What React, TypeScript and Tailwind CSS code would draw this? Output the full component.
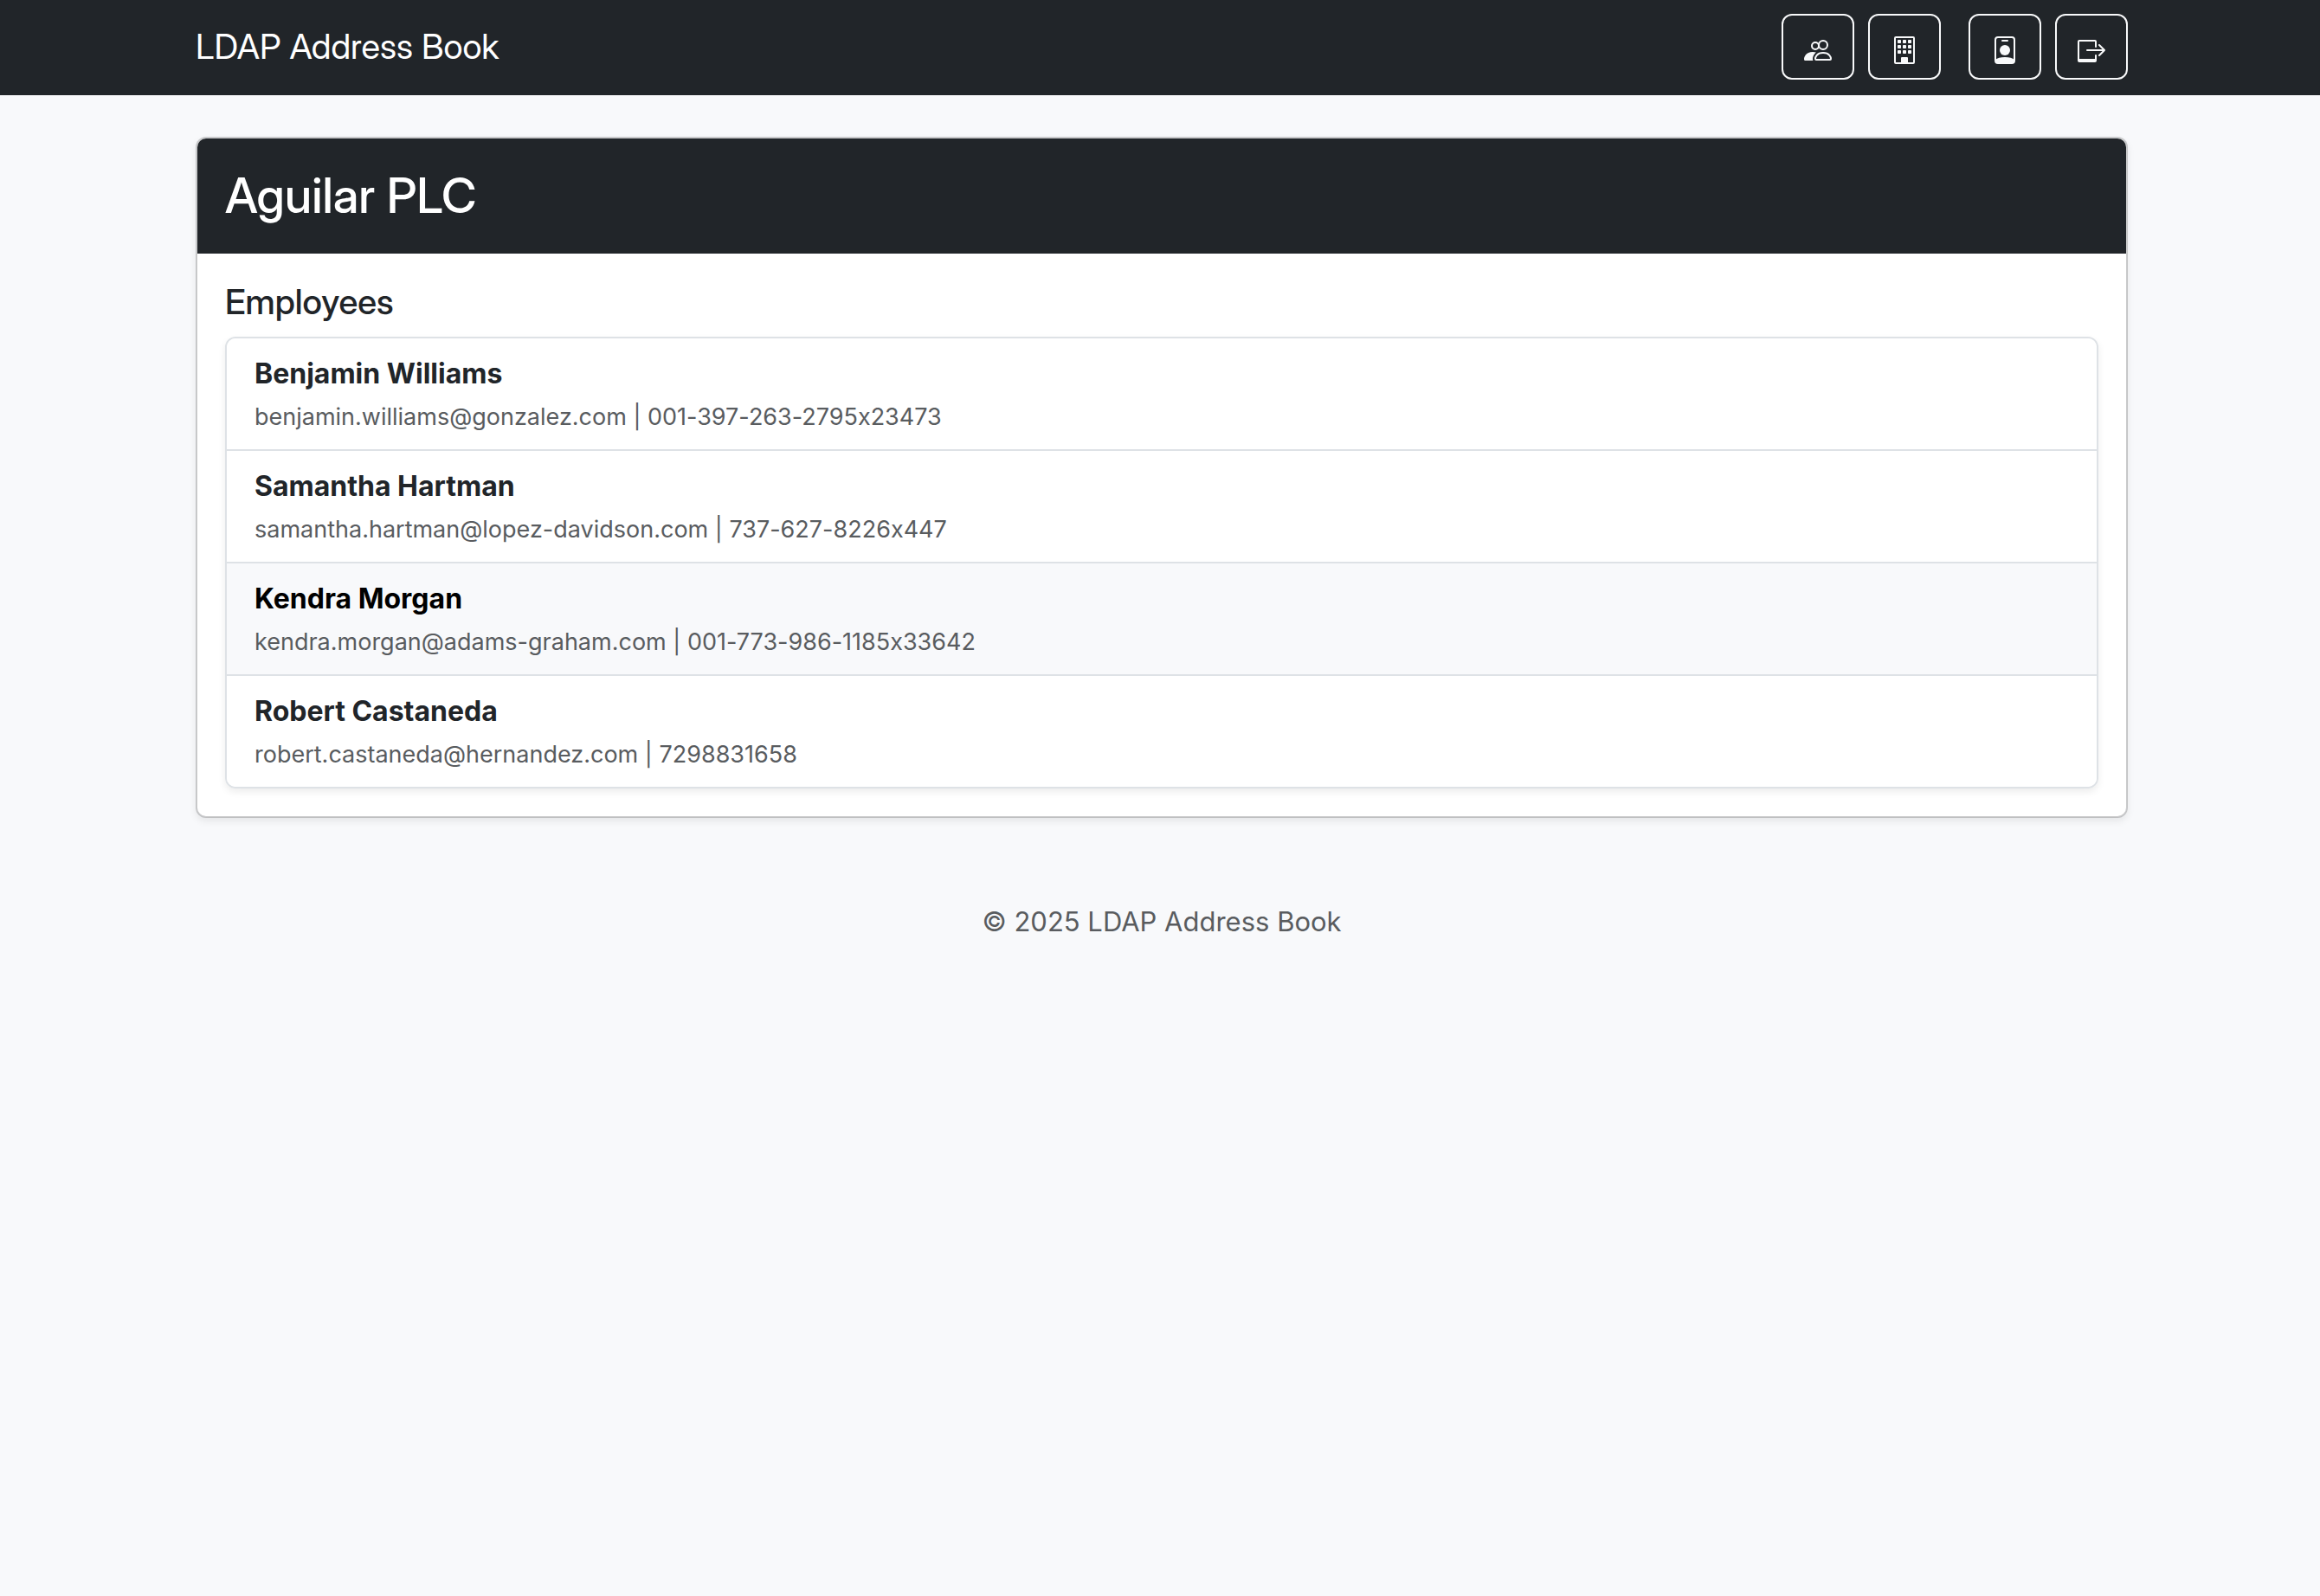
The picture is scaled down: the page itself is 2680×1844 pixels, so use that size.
import type { ReactNode } from "react";

const employees = [
  { name: "Benjamin Williams", email: "benjamin.williams@gonzalez.com", phone: "001-397-263-2795x23473" },
  { name: "Samantha Hartman", email: "samantha.hartman@lopez-davidson.com", phone: "737-627-8226x447" },
  { name: "Kendra Morgan", email: "kendra.morgan@adams-graham.com", phone: "001-773-986-1185x33642", active: true },
  { name: "Robert Castaneda", email: "robert.castaneda@hernandez.com", phone: "7298831658" },
];

function PeopleIcon() {
  return (
    <svg viewBox="0 0 32 32" className="size-8" aria-hidden="true">
      <circle cx="13" cy="11" r="4" fill="none" stroke="currentColor" strokeWidth="2" />
      <circle cx="22" cy="10" r="5" fill="#212529" stroke="currentColor" strokeWidth="2" />
      <path
        fill="currentColor"
        d="M10 18C2 18 0 24 0 26.2c0 1.3.6 1.8 1.8 1.8h8.6a4.5 4.5 0 0 1-.4-2c0-2 .8-4.2 2.2-5.8.5-.6 1.1-1.1 1.7-1.6A12 12 0 0 0 10 18Z"
      />
      <path
        fill="none"
        stroke="currentColor"
        strokeWidth="2"
        d="M22 19c-7.5 0-9 5.200-9 7 0 .8.2 1 1 1h16c.8 0 1-.2 1-1 0-1.800-1.500-7-9-7Z"
      />
    </svg>
  );
}

function BuildingIcon() {
  return (
    <svg viewBox="0 0 32 32" className="size-8" fill="currentColor" aria-hidden="true">
      <rect x="5" y="1" width="22" height="30" rx="1" fill="none" stroke="currentColor" strokeWidth="2" />
      <rect x="12" y="24" width="8" height="8" rx="1" />
      {[4, 10, 16].map((y) =>
        [8, 14, 20].map((x) => <rect key={`${x}-${y}`} x={x} y={y} width="4" height="4" rx="0.8" />),
      )}
    </svg>
  );
}

function BadgeIcon() {
  return (
    <svg viewBox="0 0 32 32" className="size-8" fill="currentColor" aria-hidden="true">
      <rect x="5" y="1" width="22" height="30" rx="3" fill="none" stroke="currentColor" strokeWidth="2" />
      <rect x="12" y="4" width="8" height="2" rx="1" />
      <circle cx="16" cy="16" r="6" />
      <path d="M5 27c2-2 6-3 11-3s9 1 11 3v1a3 3 0 0 1-3 3H8a3 3 0 0 1-3-3Z" />
    </svg>
  );
}

function LogOutIcon() {
  return (
    <svg viewBox="0 0 32 32" className="size-8" fill="none" stroke="currentColor" strokeWidth="2" strokeLinecap="round" strokeLinejoin="round" aria-hidden="true">
      <path d="M21 12V6a1 1 0 0 0-1-1H2a1 1 0 0 0-1 1v22a1 1 0 0 0 1 1h18a1 1 0 0 0 1-1v-6" />
      <path d="M2 27h18" strokeLinecap="butt" />
      <path d="M11 16h20M25 10l6 6-6 6" />
    </svg>
  );
}

function NavButton({ label, children }: { label: string; children: ReactNode }) {
  return (
    <button
      type="button"
      aria-label={label}
      className="flex h-[76px] w-[84px] items-center justify-center rounded-xl border-2 border-[#f8f9fa] pt-2 text-[#f8f9fa]"
    >
      {children}
    </button>
  );
}

export default function App() {
  return (
    <div className="min-h-screen bg-[#f8f9fb] pb-16 font-['Inter',sans-serif] text-[32px] leading-[48px] text-[#212529]">
      <nav className="bg-[#212529] pl-1">
        <div className="mx-auto flex max-w-[2232px] items-center justify-between pt-4 pb-[18px]">
          <a href="#" className="font-['Inter_Display','Inter',sans-serif] text-[40px] leading-[60px] text-white">LDAP Address Book</a>
          <div className="flex gap-8">
            <div className="flex gap-4">
              <NavButton label="People"><PeopleIcon /></NavButton>
              <NavButton label="Companies"><BuildingIcon /></NavButton>
            </div>
            <div className="flex gap-4">
              <NavButton label="Profile"><BadgeIcon /></NavButton>
              <NavButton label="Log out"><LogOutIcon /></NavButton>
            </div>
          </div>
        </div>
      </nav>

      <main className="pt-12 pl-1">
        <section className="mx-auto max-w-[2232px] rounded-xl border-2 border-black/18 bg-white bg-clip-padding shadow-[0_4px_8px_rgba(0,0,0,0.075)]">
          <header className="rounded-t-[10px] bg-[#212529] p-8">
            <h1 className="font-['Inter_Display','Inter',sans-serif] text-[56px] leading-[69px] font-medium text-white">Aguilar PLC</h1>
          </header>
          <div className="p-8">
            <h2 className="mb-4 font-['Inter_Display','Inter',sans-serif] text-[40px] leading-[48px] font-medium">Employees</h2>
            <ul className="divide-y-2 divide-[#dee2e6] overflow-hidden rounded-xl border-2 border-[#dee2e6] shadow-[0_4px_8px_rgba(0,0,0,0.075)]">
              {employees.map((e) => (
                <li key={e.name}>
                  <a href="#" className={e.active ? "block bg-[#f8f9fb] px-8 pt-4 pb-3 text-black" : "block bg-white px-8 pt-4 pb-3"}>
                    <strong className="block leading-[50px] font-bold">{e.name}</strong>
                    <span className="block text-[27px] leading-[50px] text-[#595c5f] [font-feature-settings:'calt'_0]">{e.email} | {e.phone}</span>
                  </a>
                </li>
              ))}
            </ul>
          </div>
        </section>
      </main>

      <footer className="pt-24 pl-1 text-center text-[31px] text-[#595c5f]">© 2025 LDAP Address Book</footer>
    </div>
  );
}
